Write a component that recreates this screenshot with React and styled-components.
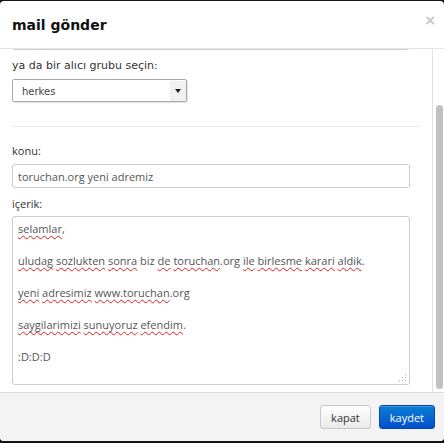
import React from 'react';
import styled, {createGlobalStyle} from 'styled-components';

const GlobalStyle = createGlobalStyle`
  html, body {
    margin: 0;
    padding: 0;
    background: #141414;
  }
  * {
    box-sizing: border-box;
  }
`;

// w: true -> word the spell checker marks
const letter = [
  [['selamlar', true], [',']],
  [],
  [['uludag', true], [' '], ['sozlukten', true], [' '], ['sonra', true], [' biz '], ['de', true], [' '],
    ['toruchan', true], ['.org '], ['ile', true], [' '], ['birlesme', true], [' '], ['karari', true], [' '],
    ['aldik', true], ['.']],
  [],
  [['yeni', true], [' '], ['adresimiz', true], [' '], ['www.toruchan', true], ['.org']],
  [],
  [['saygilarimizi', true], [' '], ['sunuyoruz', true], [' '], ['efendim', true], ['.']],
  [],
  [[':D:D:D']],
];

const App = () => {
  return (
    <Page>
      <GlobalStyle/>
      <Modal>
        <Header>
          <Title>mail gönder</Title>
          <Close>×</Close>
        </Header>

        <BodyRow>
          <Content>
            <Field $h={60}/>

            <Label $dejavu $top={6} $bottom={3}>ya da bir alıcı grubu seçin:</Label>
            <Select>
              <span>herkes</span>
              <Arrow>
                <svg width="6" height="4" viewBox="0 0 6 4">
                  <path d="M0 0 L6 0 L3 4 Z" fill="#222"/>
                </svg>
              </Arrow>
            </Select>

            <Divider/>

            <Label $top={14} $bottom={3}>konu:</Label>
            <Input>toruchan.org yeni adremiz</Input>

            <Label $top={6} $bottom={2}>içerik:</Label>
            <TextArea>
              {letter.map((line, i) => (
                <Line key={i}>
                  {line.length === 0 ? '\u00a0' : line.map(([t, w], j) => (
                    w ? <Typo key={j}>{t}</Typo> : <React.Fragment key={j}>{t}</React.Fragment>
                  ))}
                </Line>
              ))}
              <Grip>
                <svg width="8" height="8" viewBox="0 0 8 8">
                  <g fill="#b5b5b5">
                    <rect x="6" y="0" width="1.2" height="1.2"/>
                    <rect x="3" y="3" width="1.2" height="1.2"/>
                    <rect x="6" y="3" width="1.2" height="1.2"/>
                    <rect x="0" y="6" width="1.2" height="1.2"/>
                    <rect x="3" y="6" width="1.2" height="1.2"/>
                    <rect x="6" y="6" width="1.2" height="1.2"/>
                  </g>
                </svg>
              </Grip>
            </TextArea>
          </Content>

          <Track>
            <Thumb/>
          </Track>
        </BodyRow>

        <Footer>
          <Button>kapat</Button>
          <Button $primary>kaydet</Button>
        </Footer>
      </Modal>
    </Page>
  );
};

export default App;

const Page = styled.div`
  height: 443px;
  padding-top: 1px;
  overflow: hidden;
`

const Modal = styled.div`
  height: 440px;
  background: #fff;
  border-radius: 4px;
  overflow: hidden;
  display: flex;
  flex-direction: column;
`

const Header = styled.div`
  height: 48px;
  flex-shrink: 0;
  display: flex;
  align-items: center;
  justify-content: space-between;
  padding: 0 8px 0 12px;
  border-bottom: 1px solid #e5e5e5;
`

const Title = styled.h3`
  margin: 0;
  font-family: "DejaVu Sans", sans-serif;
  font-size: 14px;
  font-weight: bold;
  line-height: 20px;
  color: #111;
`

const Close = styled.span`
  font-family: "DejaVu Sans", sans-serif;
  font-size: 14px;
  font-weight: bold;
  line-height: 20px;
  color: #c6c6c6;
  margin-top: -10px;
`

const BodyRow = styled.div`
  height: 343px;
  flex-shrink: 0;
  display: flex;
`

const Content = styled.div`
  flex: 1;
  overflow: hidden;
  display: flex;
  flex-direction: column;
  justify-content: flex-end;
  padding: 0 12px 7px 12px;
`

const Field = styled.div`
  flex-shrink: 0;
  height: ${p => p.$h}px;
  width: calc(100% - 10px);
  border: 1px solid #ccc;
  border-radius: 3px;
`

const Label = styled.label`
  display: block;
  flex-shrink: 0;
  margin: ${p => p.$top}px 0 ${p => p.$bottom}px 0;
  font-family: ${p => p.$dejavu ? '"DejaVu Sans", sans-serif' : '"Open Sans", sans-serif'};
  font-size: 11px;
  line-height: 20px;
  color: #333;
`

const Select = styled.div`
  flex-shrink: 0;
  width: 175px;
  height: 23px;
  display: flex;
  align-items: center;
  justify-content: space-between;
  border: 1px solid #aaa;
  border-radius: 2px;
  box-shadow: 1px 1px 1px rgba(0, 0, 0, 0.12);
  padding-left: 9px;
  padding-top: 1px;
  font-family: "DejaVu Sans", sans-serif;
  font-size: 10px;
  color: #444;
`

const Arrow = styled.span`
  width: 16px;
  height: 100%;
  display: flex;
  align-items: center;
  justify-content: center;
  background: #f1f1f1;
`

const Divider = styled.div`
  flex-shrink: 0;
  height: 1px;
  margin-top: 24px;
  background: #e8e8e8;
`

const Input = styled.div`
  flex-shrink: 0;
  width: calc(100% - 10px);
  height: 24px;
  display: flex;
  align-items: center;
  padding: 0 5px;
  border: 1px solid #ccc;
  border-radius: 3px;
  font-family: "Open Sans", sans-serif;
  font-size: 11px;
  color: #555;
`

const TextArea = styled.div`
  position: relative;
  flex-shrink: 0;
  width: calc(100% - 10px);
  height: 169px;
  padding: 4px 5px;
  border: 1px solid #ccc;
  border-radius: 3px;
  font-family: "Open Sans", sans-serif;
  font-size: 11px;
  line-height: 16px;
  color: #555;
`

const Line = styled.div`
  white-space: pre;
`

const Typo = styled.span`
  text-decoration: underline wavy #e01b1b;
  text-decoration-thickness: 1px;
  text-underline-offset: 2px;
  text-decoration-skip-ink: none;
`

const Grip = styled.span`
  position: absolute;
  right: 2px;
  bottom: 2px;
  display: flex;
`

const Track = styled.div`
  width: 12px;
  flex-shrink: 0;
  border-left: 1px solid #e2e2e2;
  padding: 56px 1px 3px 3px;
  display: flex;
`

const Thumb = styled.div`
  flex: 1;
  background: #c1c1c1;
  border-radius: 4px;
`

const Footer = styled.div`
  flex: 1;
  display: flex;
  justify-content: flex-end;
  align-items: flex-start;
  gap: 8px;
  padding: 12px 9px 0 0;
  background: #f3f3f3;
  border-top: 1px solid #dedede;
`

const Button = styled.button`
  height: 24px;
  padding: 0 10px;
  font-family: "Open Sans", sans-serif;
  font-size: 11px;
  border-radius: 3px;
  cursor: pointer;
  color: ${p => p.$primary ? '#fff' : '#333'};
  background: ${p => p.$primary
    ? 'linear-gradient(to bottom, #0a7fd6, #0451c9)'
    : 'linear-gradient(to bottom, #ffffff, #e9e9e9)'};
  border: 1px solid ${p => p.$primary ? '#0447b0' : '#c8c8c8'};
  box-shadow: inset 0 1px 0 rgba(255, 255, 255, 0.2);
`
